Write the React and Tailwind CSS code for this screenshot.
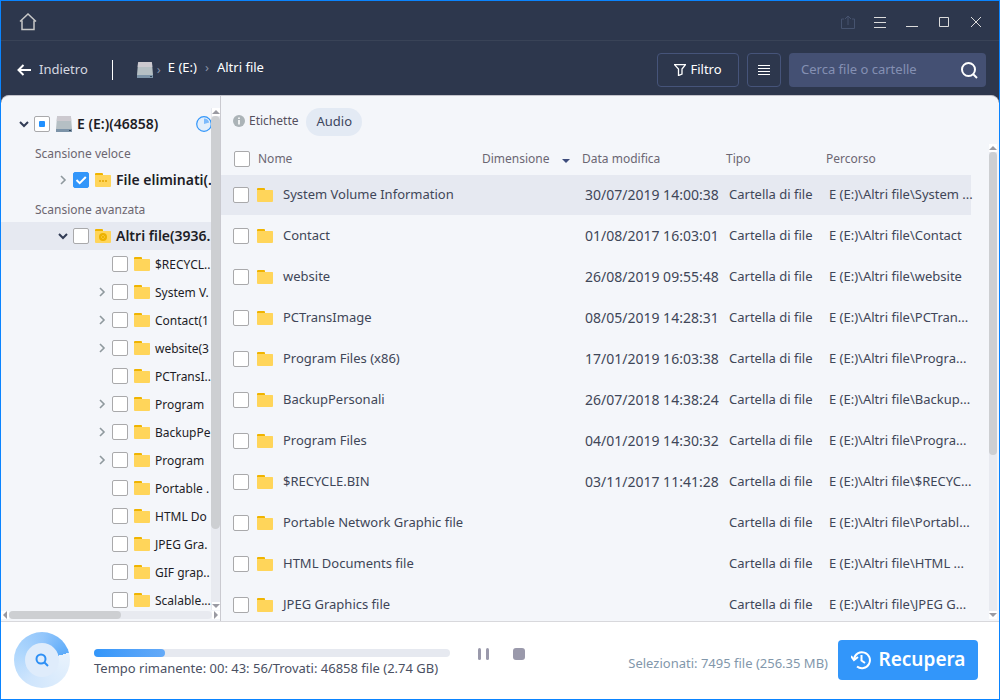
import React from "react";

const tree = [
  { label: "$RECYCL..", leaf: true },
  { label: "System V." },
  { label: "Contact(1" },
  { label: "website(3" },
  { label: "PCTransI..", leaf: true },
  { label: "Program" },
  { label: "BackupPe" },
  { label: "Program" },
  { label: "Portable .", leaf: true },
  { label: "HTML Do", leaf: true },
  { label: "JPEG Gra.", leaf: true },
  { label: "GIF grap..", leaf: true },
  { label: "Scalable...", leaf: true },
];

const files = [
  { name: "System Volume Information", date: "30/07/2019 14:00:38", path: "E (E:)\\Altri file\\System ..." },
  { name: "Contact", date: "01/08/2017 16:03:01", path: "E (E:)\\Altri file\\Contact" },
  { name: "website", date: "26/08/2019 09:55:48", path: "E (E:)\\Altri file\\website" },
  { name: "PCTransImage", date: "08/05/2019 14:28:31", path: "E (E:)\\Altri file\\PCTran..." },
  { name: "Program Files (x86)", date: "17/01/2019 16:03:38", path: "E (E:)\\Altri file\\Progra..." },
  { name: "BackupPersonali", date: "26/07/2018 14:38:24", path: "E (E:)\\Altri file\\Backup..." },
  { name: "Program Files", date: "04/01/2019 14:30:32", path: "E (E:)\\Altri file\\Progra..." },
  { name: "$RECYCLE.BIN", date: "03/11/2017 11:41:28", path: "E (E:)\\Altri file\\$RECYC..." },
  { name: "Portable Network Graphic file", date: "", path: "E (E:)\\Altri file\\Portabl..." },
  { name: "HTML Documents file", date: "", path: "E (E:)\\Altri file\\HTML ..." },
  { name: "JPEG Graphics file", date: "", path: "E (E:)\\Altri file\\JPEG G..." },
];

const Checkbox = ({ label, id, checked, partial }) => (
  <span className="grid size-4 shrink-0">
    <input
      type="checkbox"
      id={id}
      aria-label={id ? undefined : label}
      defaultChecked={checked}
      className="col-start-1 row-start-1 size-4 appearance-none rounded-[2px] border border-[#a9a9ab] bg-white checked:border-[#3296fa] checked:bg-[#3296fa]"
    />
    {checked && (
      <svg viewBox="0 0 16 16" className="pointer-events-none col-start-1 row-start-1 size-4" fill="none" stroke="#fff" strokeWidth="2">
        <path d="M3.5 8l3.2 3.2L12.8 5" />
      </svg>
    )}
    {partial && <span className="pointer-events-none col-start-1 row-start-1 size-1.5 place-self-center rounded-[1px] bg-[#2090ff]" />}
  </span>
);

const Folder = ({ mark }) => (
  <svg viewBox="0 0 16 16" className="size-4 shrink-0">
    <path d="M0 2Q0 1 1 1H7Q8 1 8 2V5H0z" fill="#f0b400" />
    <path d="M0 3H15.500Q16 3 16 3.500V14Q16 15 15 15H1Q0 15 0 14z" fill="#ffd55a" />
    {mark === "dash" && <path d="M4 9H12" stroke="#e3a400" strokeWidth="1.500" strokeDasharray="2 1" />}
    {mark === "disc" && (
      <>
        <circle cx="8" cy="9" r="4" fill="#edb200" />
        <path d="M6 9h1M9 9h1M8 7v1M8 10v1" stroke="#ffd55a" />
      </>
    )}
  </svg>
);

const Drive = ({ className }) => (
  <svg viewBox="0 0 16 16" className={className}>
    <path d="M2 0H14Q15 0 15 1L16 13H0L1 1Q1 0 2 0z" fill="#b5bfc4" />
    <path d="M2 0H14Q15 0 15 1L15.300 5H.700L1 1Q1 0 2 0z" fill="#ccc9cf" />
    <path d="M0 13H16V16H0z" fill="#7c93a8" />
    <path d="M13 14.500h2" stroke="#33475a" />
  </svg>
);

const Chevron = ({ open }) => (
  <svg viewBox="0 0 10 10" className="size-[10px] shrink-0" fill="none" stroke="currentColor" strokeWidth={open ? 2 : 1.6}>
    <path d={open ? "M1 3l4 4 4-4" : "M3 1l4 4-4 4"} />
  </svg>
);

const Tip = ({ d }) => (
  <svg viewBox="0 0 8 8" className="size-2 shrink-0 bg-white" fill="#9a9aa2">
    <path d={d} />
  </svg>
);

const TitleButton = ({ label, children }) => (
  <button type="button" aria-label={label} className="flex h-8 w-8 items-center justify-center">
    <svg viewBox="0 0 16 16" className="size-4" fill="none" stroke="currentColor">
      {children}
    </svg>
  </button>
);

const Header = () => (
  <header className="bg-[#2d374d] text-white">
    <div className="flex h-10 items-center justify-between border-b border-[#394357] pr-[7px] pl-[18px] text-[#dcdcdc]">
      <button type="button" aria-label="Home" className="pt-0.5">
        <svg viewBox="0 0 18 18" className="size-[18px]" fill="none" stroke="#c8c8c8" strokeWidth="1.500">
          <path d="M1 8.500L9 1l8 7.500M3 7.500V16.500H15V7.500" />
        </svg>
      </button>
      <div className="flex pt-0.5">
        <TitleButton label="Esporta">
          <g stroke="#46536f">
            <path d="M8 11V2M5 5l3-3 3 3M4 5H1.500V14.500H14.500V5H12" />
          </g>
        </TitleButton>
        <TitleButton label="Menu">
          <path d="M2 3.500H14M2 8.500H14M2 13.500H14" />
        </TitleButton>
        <TitleButton label="Riduci">
          <path d="M2 12.500H14" />
        </TitleButton>
        <TitleButton label="Ingrandisci">
          <path d="M3.500 3.500h9v9h-9z" />
        </TitleButton>
        <TitleButton label="Chiudi">
          <path d="M3 3l10 10M13 3L3 13" />
        </TitleButton>
      </div>
    </div>

    <div className="flex h-[54px] items-center gap-2 pt-1 pr-[13px] pl-4">
      <button type="button" className="flex items-center gap-2 text-[13px] text-[#d5d8e0]">
        <svg viewBox="0 0 14 12" className="h-3 w-[14px]" fill="none" stroke="#fff" strokeWidth="2">
          <path d="M14 6H2M6.500 1L1.500 6l5 5" />
        </svg>
        Indietro
      </button>
      <span className="ml-4 h-5 w-px bg-white" />
      <nav className="ml-4 flex items-center pb-1 text-[13px]">
        <Drive className="mt-1 size-4" />
        <span className="mx-1 w-[7px] pt-1 text-[#8691a8]">›</span>
        <a href="#e">E (E:)</a>
        <span className="mx-1 pl-1 text-[#8691a8]">›</span>
        <a href="#altri" className="ml-1">Altri file</a>
      </nav>
      <div className="ml-auto flex gap-2">
        <button type="button" className="flex h-[34px] w-[82px] items-center justify-center gap-1 rounded-sm border border-[#46547a] text-[13px]">
          <svg viewBox="0 0 12 12" className="size-3" fill="none" stroke="currentColor" strokeWidth="1.300">
            <path d="M.5.700H11.500L8 5V10L4.500 11.500V5z" />
          </svg>
          Filtro
        </button>
        <button type="button" aria-label="Vista" className="flex h-[34px] w-[34px] items-center justify-center rounded-sm border border-[#46547a]">
          <svg viewBox="0 0 12 12" className="size-3" stroke="currentColor">
            <path d="M0 1.500H12M0 4.500H12M0 7.500H12M0 10.500H12" />
          </svg>
        </button>
        <form className="flex h-[34px] w-[197px] items-center rounded-sm bg-[#445073] pr-2 pl-3">
          <input
            type="search"
            aria-label="Cerca file o cartelle"
            placeholder="Cerca file o cartelle"
            className="min-w-0 flex-1 bg-transparent text-[13px] outline-none placeholder:text-[#8590b3]"
          />
          <button type="button" aria-label="Cerca">
            <svg viewBox="0 0 18 18" className="size-[18px]" fill="none" stroke="#fff" strokeWidth="2">
              <circle cx="8.500" cy="8.500" r="6.500" />
              <path d="M13 13l4 4" />
            </svg>
          </button>
        </form>
      </div>
    </div>
  </header>
);

const Sidebar = () => (
  <aside className="flex w-[220px] shrink-0 flex-col border-r border-[#cacad0]">
    <div className="flex min-h-0 flex-1">
      <div className="min-w-0 flex-1 overflow-hidden pt-[14px] whitespace-nowrap text-[#1d1d26]">
        <div className="flex h-7 items-center pl-[18px] text-sm font-semibold">
          <span className="mr-[5px] flex text-[#323c55]"><Chevron open /></span>
          <Checkbox id="drive" partial />
          <Drive className="mr-[5px] ml-1.5 size-4 shrink-0" />
          <label htmlFor="drive">E (E:)(46858)</label>
          <svg viewBox="0 0 16 16" className="mr-[-1px] ml-auto size-4 shrink-0">
            <circle cx="8" cy="8" r="7.300" fill="#e2eefb" stroke="#3296fa" strokeWidth="1.200" />
            <path d="M8 8V2.500A5.500 5.500 0 0 1 13.200 6.500z" fill="#7cbafc" />
          </svg>
        </div>
        <div className="flex h-7 items-center pt-1 pl-[34px] text-xs text-[#6c6670]">Scansione veloce</div>
        <div className="flex h-7 items-center pl-[57px] text-sm font-semibold">
          <span className="mr-[5px] flex text-[#8f999e]"><Chevron /></span>
          <Checkbox id="deleted" checked />
          <span className="mr-[5px] ml-1.5 flex"><Folder mark="dash" /></span>
          <label htmlFor="deleted">File eliminati(.</label>
        </div>
        <div className="flex h-7 items-center pt-1 pl-[34px] text-xs text-[#6c6670]">Scansione avanzata</div>
        <div className="flex h-7 items-center bg-[#e6e9f1] pl-[57px] text-sm font-semibold">
          <span className="mr-[5px] flex text-[#323c55]"><Chevron open /></span>
          <Checkbox id="others" />
          <span className="mr-[5px] ml-1.5 flex"><Folder mark="disc" /></span>
          <label htmlFor="others">Altri file(3936.</label>
        </div>
        {tree.map((node, i) => (
          <div key={i} className="flex h-7 items-center pl-24 text-xs">
            <span className="mr-[5px] flex w-[10px] shrink-0 text-[#8f999e]">{!node.leaf && <Chevron />}</span>
            <Checkbox id={`node-${i}`} />
            <span className="mr-[5px] ml-1.5 flex"><Folder /></span>
            <label htmlFor={`node-${i}`} className="pt-px">{node.label}</label>
          </div>
        ))}
      </div>
      <div className="flex w-[9px] flex-col items-center bg-[#e8eaf0]">
        <span className="h-3 w-full bg-[#f4f6fa]" />
        <Tip d="M0 6L4 2l4 4z" />
        <div className="w-full flex-1">
          <div className="h-[85%] rounded-full bg-[#cdcfd2]" />
        </div>
        <Tip d="M0 2l4 4 4-4z" />
      </div>
    </div>
    <div className="mb-0.5 flex h-[9px] items-center">
      <Tip d="M6 0L2 4l4 4z" />
      <div className="h-2 flex-1 rounded-full bg-[#e8eaf0]">
        <div className="h-2 w-[55%] rounded-full bg-[#cdcfd2]" />
      </div>
      <Tip d="M2 0l4 4-4 4z" />
    </div>
  </aside>
);

const FileList = () => (
  <main className="flex min-w-0 flex-1 flex-col">
    <div className="flex h-12 shrink-0 items-center gap-2 pt-1 pl-3">
      <span className="flex items-center gap-1 pb-0.5 text-xs text-[#55505e]">
        <svg viewBox="0 0 12 12" className="size-3">
          <circle cx="6" cy="6" r="6" fill="#abb3b7" />
          <path d="M6 2.500v1.500M6 5v4.500" stroke="#fff" strokeWidth="1.600" />
        </svg>
        Etichette
      </span>
      <button type="button" className="h-7 rounded-full bg-[#e3eaf4] px-[10px] text-[13px] text-[#3d465e]">Audio</button>
    </div>
    <div className="flex min-h-0 flex-1">
      <div className="min-w-0 flex-1 overflow-hidden pr-[18px]">
        <table className="w-full table-fixed border-separate border-spacing-0 text-left text-[13px] whitespace-nowrap text-[#3f4658]">
          <thead className="text-xs text-[#6b6673]">
            <tr className="h-[31px]">
              <th className="pb-0.5 font-normal">
                <div className="flex items-center gap-2 pl-[13px]">
                  <Checkbox label="Seleziona tutto" />
                  Nome
                </div>
              </th>
              <th className="w-[100px] pb-0.5 font-normal">
                <div className="flex items-center justify-between pr-3">
                  Dimensione
                  <svg viewBox="0 0 8 4" className="mt-1 h-1 w-2" fill="#3d4c7c">
                    <path d="M0 0h8L4 4z" />
                  </svg>
                </div>
              </th>
              <th className="w-36 pb-0.5 font-normal">Data modifica</th>
              <th className="w-[100px] pb-0.5 font-normal">Tipo</th>
              <th className="w-[145px] pb-0.5 font-normal">Percorso</th>
            </tr>
          </thead>
          <tbody className="[&_td]:border-b [&_td]:border-[#f4f6fa]">
            {files.map((file, i) => (
              <tr key={file.name} className={i === 0 ? "h-[41px] bg-[#e6e9f1]" : "h-[41px]"}>
                <td>
                  <div className="flex items-center pl-3">
                    <Checkbox id={`file-${i}`} />
                    <span className="mr-[10px] ml-2 flex"><Folder /></span>
                    <label htmlFor={`file-${i}`}>{file.name}</label>
                  </div>
                </td>
                <td />
                <td className="pl-[3px] text-sm">{file.date}</td>
                <td className="pl-[3px]">Cartella di file</td>
                <td className="pl-[3px]">{file.path}</td>
              </tr>
            ))}
          </tbody>
        </table>
      </div>
      <div className="mr-0.5 mb-0.5 flex w-2 flex-col bg-[#e8eaf0]">
        <Tip d="M0 6L4 2l4 4z" />
        <div className="flex-1">
          <div className="h-[66%] rounded-full bg-[#cdcfd2]" />
        </div>
        <Tip d="M0 2l4 4 4-4z" />
      </div>
    </div>
  </main>
);

const Footer = () => (
  <footer className="flex h-[78px] shrink-0 items-center border-t border-[#d8d8dc] bg-white pr-[21px] pb-0.5 pl-[13px]">
    <div className="flex size-14 shrink-0 items-center justify-center rounded-full bg-[conic-gradient(from_75deg,#e8f2fc,#cfe5fc_38%,#add6fd_60%,#93c6fb_80%,#5cabf9)]">
      <svg viewBox="0 0 34 34" className="size-[34px] rounded-full bg-[#dfecfb]" fill="none" stroke="#2e90f5" strokeWidth="2">
        <circle cx="16" cy="16" r="4.500" />
        <path d="M19 19l4 4" />
      </svg>
    </div>
    <div className="ml-6 max-w-[356px] min-w-0 flex-1 pt-2">
      <div role="progressbar" aria-label="Scansione" aria-valuenow={20} className="h-2 rounded-full bg-[#e6e9f0]">
        <div className="h-2 w-1/5 rounded-full bg-linear-to-r from-[#3296fa] to-[#64aaf8]" />
      </div>
      <p className="mt-0.5 text-[13px] whitespace-nowrap text-[#4a5062]">
        Tempo rimanente: 00: 43: 56/Trovati: 46858 file (2.74 GB)
      </p>
    </div>
    <div className="mb-3 ml-7 flex items-center gap-6">
      <button type="button" aria-label="Pausa" className="flex gap-[5px]">
        <span className="h-3 w-[3px] rounded-xs bg-[#9a99ab]" />
        <span className="h-3 w-[3px] rounded-xs bg-[#9a99ab]" />
      </button>
      <button type="button" aria-label="Interrompi" className="size-3 rounded-[3px] bg-[#9a99ab]" />
    </div>
    <div className="ml-auto flex items-center gap-[10px]">
      <span className="pt-2 text-[13px] whitespace-nowrap text-[#8297ab]">Selezionati: 7495 file (256.35 MB)</span>
      <button type="button" className="flex h-10 w-[140px] items-center justify-center gap-2 rounded-sm bg-[#3296fa] text-[19px] font-semibold text-white">
        <svg viewBox="0 0 20 20" className="size-5" fill="none" stroke="currentColor" strokeWidth="2">
          <path d="M3 9A8 8 0 1 1 6 16.500M10.500 5V10.500L14 13" />
          <path d="M0 6l3 4 4-3" />
        </svg>
        Recupera
      </button>
    </div>
  </footer>
);

const App = () => {
  return (
    <div className="flex h-screen flex-col overflow-hidden border border-[#0a84ff] bg-[#2d374d] font-['Noto_Sans','Open_Sans',sans-serif]">
      <Header />
      <div className="flex min-h-0 flex-1 overflow-hidden rounded-t-lg border-t border-[#c3c3cb] bg-[#f4f6fa]">
        <Sidebar />
        <FileList />
      </div>
      <Footer />
    </div>
  );
};

export default App;
